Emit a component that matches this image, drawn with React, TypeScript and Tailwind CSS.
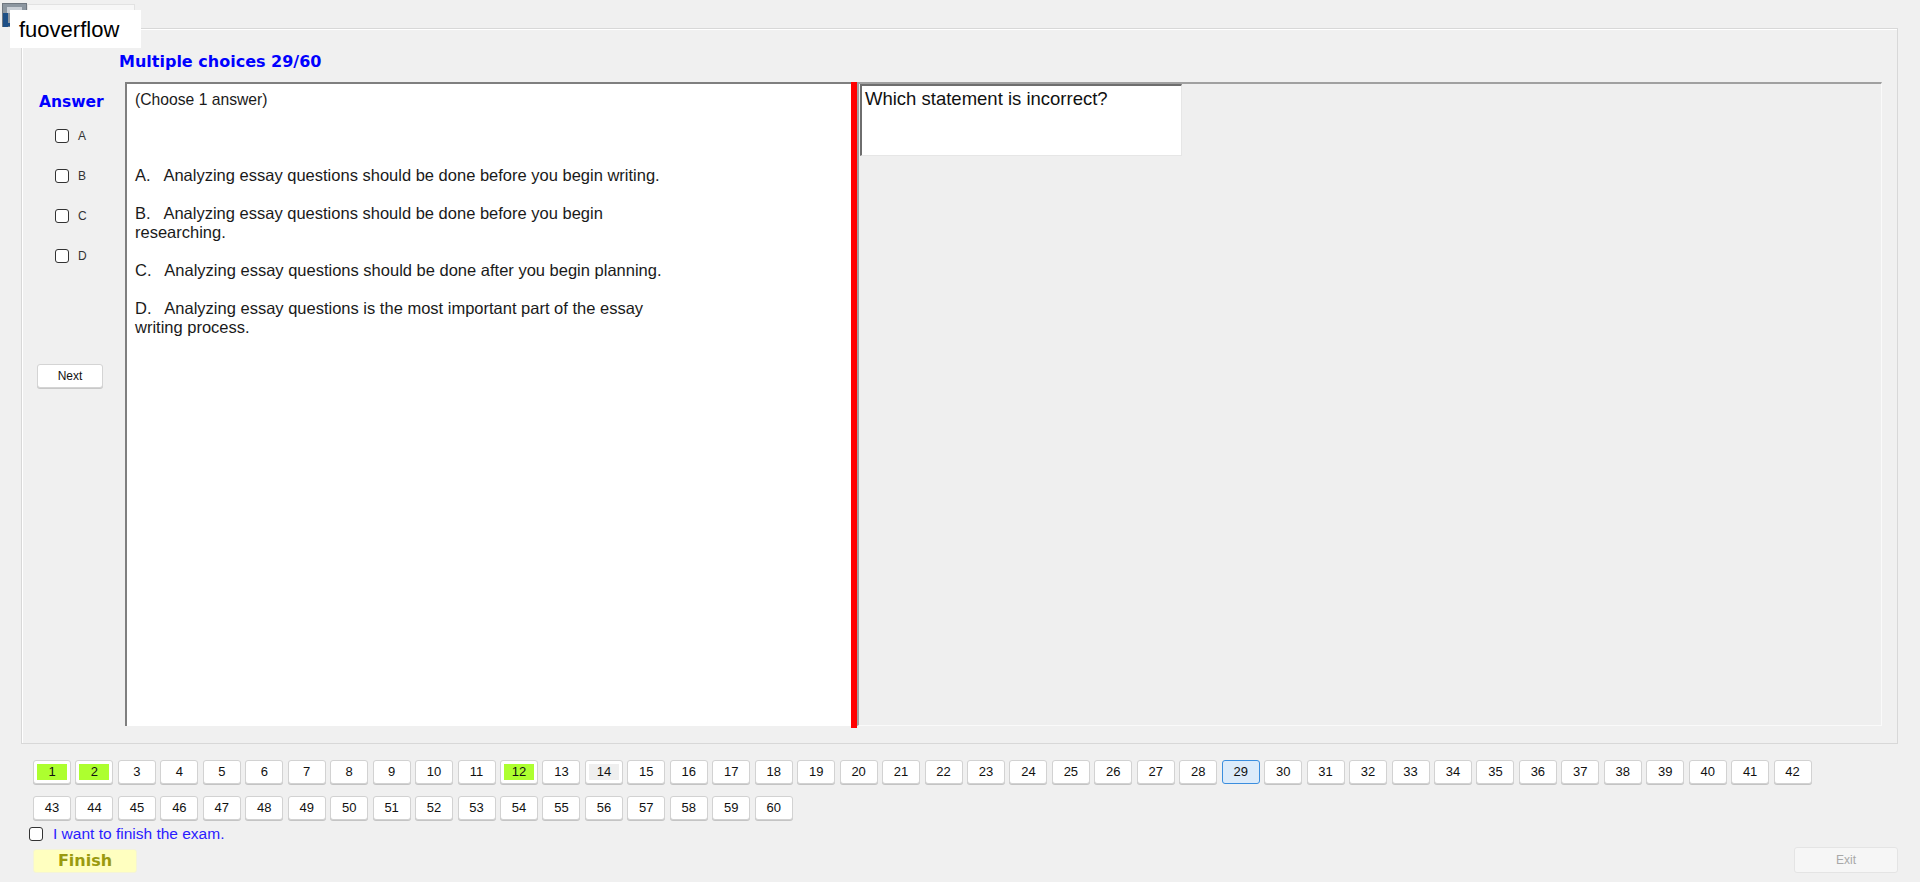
import React from "react";

const sans = { fontFamily: '"Liberation Sans", Arial, sans-serif' };
const wide = { fontFamily: '"DejaVu Sans", Verdana, sans-serif' };

const options = [
  "A.\u00a0\u00a0 Analyzing essay questions should be done before you begin writing.",
  "B.\u00a0\u00a0 Analyzing essay questions should be done before you begin researching.",
  "C.\u00a0\u00a0 Analyzing essay questions should be done after you begin planning.",
  "D.\u00a0\u00a0 Analyzing essay questions is the most important part of the essay writing process.",
];

const answered = new Set([1, 2, 12]);
const visited = new Set([14]);
const current = 29;

function Box({ className = "" }: { className?: string }) {
  return (
    <span
      className={`inline-block w-[14px] h-[14px] rounded-[3px] border border-[#333] bg-white ${className}`}
    />
  );
}

function NavButton({ n }: { n: number }) {
  if (n === current) {
    return (
      <div className="w-[38px] h-[24px] rounded-[3px] border border-[#3b8ede] bg-[#dcebfa] flex items-center justify-center text-[13px] text-[#111]">
        {n}
      </div>
    );
  }
  const fill = answered.has(n)
    ? "bg-[#adff2f]"
    : visited.has(n)
    ? "bg-[#efefef]"
    : "bg-white";
  return (
    <div className="w-[38px] h-[24px] rounded-[3px] border border-[#d2d2d2] bg-white p-[3px] shadow-[0_1px_0_#c4c4c4]">
      <div
        className={`w-full h-full ${fill} flex items-center justify-center text-[13px] text-[#111]`}
      >
        {n}
      </div>
    </div>
  );
}

export default function App() {
  const row1 = Array.from({ length: 42 }, (_, i) => i + 1);
  const row2 = Array.from({ length: 18 }, (_, i) => i + 43);

  return (
    <div
      className="relative w-[1920px] h-[882px] overflow-hidden bg-[#f0f0f0]"
      style={sans}
    >
      {/* window icon and title strip */}
      <div className="absolute left-[27px] top-[4px] w-[108px] h-[28px] bg-[#f7f7f7] border border-[#e2e2e2]" />
      <div className="absolute left-[2px] top-[3px] w-[25px] h-[24px] bg-[#8c96a0] border border-[#6f7780]">
        <div className="absolute left-[4px] top-[3px] w-[15px] h-[6px] bg-[#c9cfd6]" />
        <div className="absolute left-0 top-[9px] w-[5px] h-[14px] bg-[#1d4f86]" />
        <div className="absolute left-0 bottom-0 w-[12px] h-[3px] bg-[#1d4f86]" />
      </div>
      <div className="absolute left-[10px] top-[10px] w-[131px] h-[38px] bg-white flex items-center pl-[9px] text-[22px] text-black">
        fuoverflow
      </div>

      <div className="flex flex-col pl-[21px] pt-[28px]">
        {/* question group */}
        <div className="w-[1877px] h-[716px] border border-[#d8d8d8] shadow-[inset_1px_1px_0_#ffffff] flex flex-col">
          <div
            className="pl-[97px] pt-[23px] leading-[20px] text-[16px] font-bold text-[#0000ff]"
            style={wide}
          >
            Multiple choices 29/60
          </div>

          <div className="mt-[10px] flex h-[644px]">
            {/* answer column */}
            <div className="w-[103px] flex flex-col">
              <div
                className="mt-[10px] pl-[17px] leading-[20px] text-[15.5px] font-bold text-[#0000ff]"
                style={wide}
              >
                Answer
              </div>
              <div className="mt-[16px] flex flex-col gap-[24px] pl-[33px]">
                {["A", "B", "C", "D"].map((l) => (
                  <label key={l} className="flex items-center h-[16px] gap-[9px]">
                    <Box />
                    <span className="text-[12px] text-[#333]">{l}</span>
                  </label>
                ))}
              </div>
              <button className="mt-[100px] ml-[15px] w-[66px] h-[24px] rounded-[3px] bg-white border border-[#d4d4d4] shadow-[0_1px_0_#c8c8c8] text-[12px] text-[#111]">
                Next
              </button>
            </div>

            {/* answers text */}
            <div className="w-[726px] h-full bg-white border-t-2 border-l-2 border-[#7f7f7f] pl-[8px] pt-[6px] leading-[19px] text-[#1a1a1a]">
              <p className="text-[15.7px]">(Choose 1 answer)</p>
              <div className="mt-[57px] w-[542px] flex flex-col gap-[19px] text-[16.5px]">
                {options.map((o) => (
                  <p key={o}>{o}</p>
                ))}
              </div>
            </div>

            {/* splitter */}
            <div className="w-[6px] h-[646px] bg-[#ff0000]" />

            {/* question pane */}
            <div className="w-[1025px] h-full border-t-2 border-l-2 border-[#a0a0a0] border-r border-b border-r-[#fafafa] border-b-[#fafafa] bg-[#efefef] pl-[1px]">
              <div className="w-[322px] h-[72px] bg-white border-t-2 border-l-2 border-[#6e6e6e] border-r border-b border-r-[#e6e6e6] border-b-[#e6e6e6] pl-[3px] pt-[2px] text-[18.5px] leading-[22px] text-[#111]">
                Which statement is incorrect?
              </div>
            </div>
          </div>
        </div>

        {/* question navigation */}
        <div className="mt-[16px] ml-[12px] w-[1865px] flex flex-col">
          <div className="flex gap-[4.46px]">
            {row1.map((n) => (
              <NavButton key={n} n={n} />
            ))}
          </div>
          <div className="mt-[12px] flex gap-[4.46px]">
            {row2.map((n) => (
              <NavButton key={n} n={n} />
            ))}
          </div>
          <label className="mt-[6px] -ml-[4px] flex items-center h-[16px] gap-[10px]">
            <Box />
            <span className="text-[15.5px] text-[#2a1cff]">I want to finish the exam.</span>
          </label>
          <div className="mt-[5px] flex justify-between items-end">
            <button
              className="w-[104px] h-[24px] rounded-[3px] bg-[#ffffc0] border border-[#f4f4d8] text-[16px] font-bold text-[#9a9a10] leading-[22px]"
              style={wide}
            >
              Finish
            </button>
            <button className="w-[104px] h-[26px] rounded-[3px] bg-[#f6f6f6] border border-[#e4e4e4] text-[12px] text-[#a8a8a8]">
              Exit
            </button>
          </div>
        </div>
      </div>
    </div>
  );
}
